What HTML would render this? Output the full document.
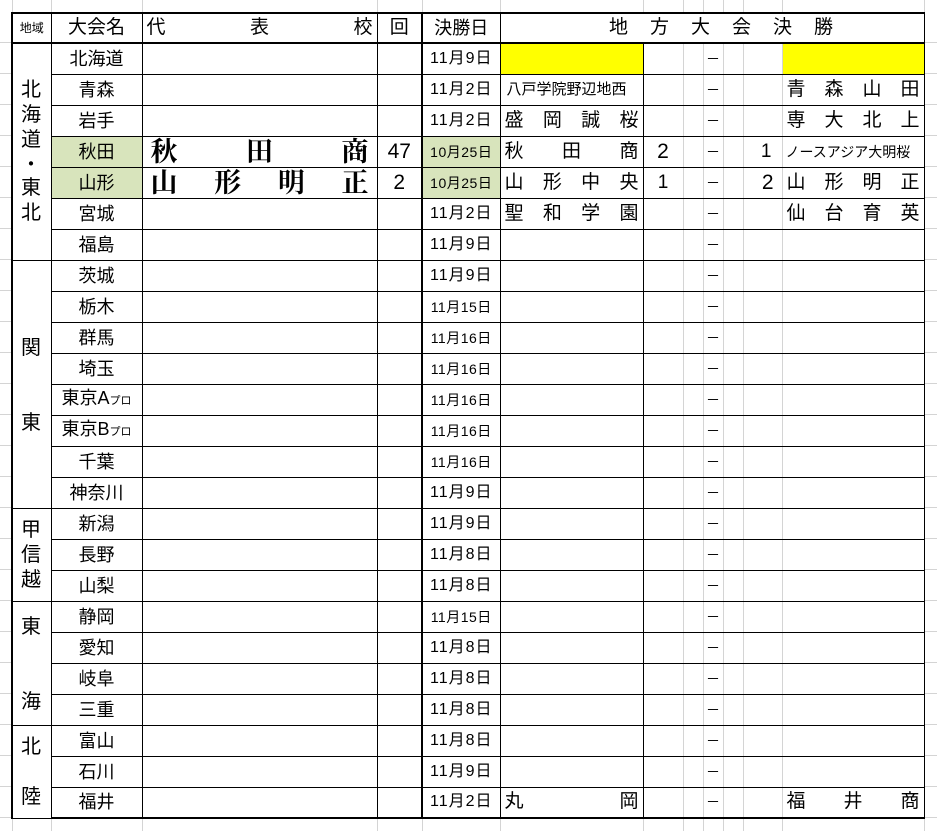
<!DOCTYPE html>
<html><head><meta charset="utf-8">
<style>
*{margin:0;padding:0;box-sizing:border-box}
body{width:937px;height:831px;background:#fff;position:relative;overflow:hidden;font-family:"Liberation Sans","Noto Sans CJK JP",sans-serif;color:#000}
.gv{position:absolute;width:1px;background:#d4d4d4}
table{position:absolute;left:11px;top:12px;border-collapse:collapse;table-layout:fixed;width:912px}
td{border:1px solid #000;padding:0;height:31px;line-height:20px;font-size:18px;text-align:center;vertical-align:middle;white-space:nowrap;overflow:hidden}
tr.h td{height:30px}
td.reg{border-left:2px solid #000}
td.d{border-left:2px solid #000;font-size:16px;letter-spacing:1px}
td.d.s{font-size:14px;letter-spacing:0.5px}
td.g{background:#d8e4bc}
td.r{border-left:1px solid #d4d4d4;border-right:1px solid #d4d4d4}
td.m{font-size:14px}
td.last{border-right:1px solid #000}
.sp{display:flex;justify-content:space-between;padding:0 4px;font-size:19px}
.big{display:flex;justify-content:space-between;padding:0 8px;font-family:"Liberation Serif","Noto Serif CJK JP",serif;font-weight:bold;font-size:27px;line-height:28px}
.y{background:#ff0}
small{font-size:11px}
tr.bot td{border-bottom:2px solid #000}
tr.top td{border-top:2px solid #000}
.lab{position:absolute;left:12px;width:38px;text-align:center;font-size:20px;line-height:20px}
</style></head><body>
<div class="gv" style="left:12px;top:0;height:12px"></div>
<div class="gv" style="left:51px;top:0;height:12px"></div>
<div class="gv" style="left:142px;top:0;height:12px"></div>
<div class="gv" style="left:377px;top:0;height:12px"></div>
<div class="gv" style="left:422px;top:0;height:12px"></div>
<div class="gv" style="left:500px;top:0;height:12px"></div>
<div class="gv" style="left:643px;top:0;height:12px"></div>
<div class="gv" style="left:683px;top:0;height:12px"></div>
<div class="gv" style="left:703px;top:0;height:12px"></div>
<div class="gv" style="left:723px;top:0;height:12px"></div>
<div class="gv" style="left:743px;top:0;height:12px"></div>
<div class="gv" style="left:782px;top:0;height:12px"></div>
<div class="gv" style="left:924px;top:0;height:831px"></div>
<div class="gv" style="left:12px;top:818px;height:13px"></div>
<div class="gv" style="left:51px;top:818px;height:13px"></div>
<div class="gv" style="left:142px;top:818px;height:13px"></div>
<div class="gv" style="left:377px;top:818px;height:13px"></div>
<div class="gv" style="left:422px;top:818px;height:13px"></div>
<div class="gv" style="left:500px;top:818px;height:13px"></div>
<div class="gv" style="left:643px;top:818px;height:13px"></div>
<div class="gv" style="left:683px;top:818px;height:13px"></div>
<div class="gv" style="left:703px;top:818px;height:13px"></div>
<div class="gv" style="left:723px;top:818px;height:13px"></div>
<div class="gv" style="left:743px;top:818px;height:13px"></div>
<div class="gv" style="left:782px;top:818px;height:13px"></div>
<div style="position:absolute;left:0;top:12px;width:12px;height:806px;background:repeating-linear-gradient(to bottom,transparent 0,transparent 30px,#d4d4d4 30px,#d4d4d4 31px)"></div>
<div style="position:absolute;left:925px;top:12px;width:12px;height:806px;background:repeating-linear-gradient(to bottom,transparent 0,transparent 30px,#d4d4d4 30px,#d4d4d4 31px)"></div>

<table>
<colgroup><col style="width:39px"><col style="width:91px"><col style="width:235px"><col style="width:45px"><col style="width:78px"><col style="width:143px"><col style="width:40px"><col style="width:20px"><col style="width:20px"><col style="width:20px"><col style="width:39px"><col style="width:142px"></colgroup>
<tr class="h top">
<td style="font-size:12px;border-left:2px solid #000">地域</td><td style="font-size:19px">大会名</td>
<td><div class="sp" style="font-size:19px"><span>代</span><span>表</span><span>校</span></div></td>
<td style="font-size:19px">回</td><td class="d" style="font-size:18px;letter-spacing:0">決勝日</td>
<td colspan="7" class="last" style="font-size:19px;letter-spacing:22px;padding-left:40px">地方大会決勝</td></tr>

<tr class="top"><td class="reg" rowspan="7"></td><td>北海道</td><td></td><td></td><td class="d">11月9日</td><td class="y"></td><td class="r"></td><td class="r"></td><td class="r m">－</td><td class="r"></td><td class="r"></td><td class="y last"></td></tr>
<tr><td>青森</td><td></td><td></td><td class="d">11月2日</td><td style="font-size:15px;text-align:left;padding-left:6px">八戸学院野辺地西</td><td class="r"></td><td class="r"></td><td class="r m">－</td><td class="r"></td><td class="r"></td><td class="last"><div class="sp"><span>青</span><span>森</span><span>山</span><span>田</span></div></td></tr>
<tr><td>岩手</td><td></td><td></td><td class="d">11月2日</td><td><div class="sp"><span>盛</span><span>岡</span><span>誠</span><span>桜</span></div></td><td class="r"></td><td class="r"></td><td class="r m">－</td><td class="r"></td><td class="r"></td><td class="last"><div class="sp"><span>専</span><span>大</span><span>北</span><span>上</span></div></td></tr>
<tr><td class="g">秋田</td><td><div class="big"><span>秋</span><span>田</span><span>商</span></div></td><td style="font-size:21px">47</td><td class="d s g">10月25日</td><td><div class="sp"><span>秋</span><span>田</span><span>商</span></div></td><td class="r" style="font-size:21px">2</td><td class="r"></td><td class="r m">－</td><td class="r"></td><td class="r" style="font-size:19px;text-align:right;padding-right:10px">1</td><td class="last" style="font-size:14px;text-align:left;padding-left:3px">ノースアジア大明桜</td></tr>
<tr><td class="g">山形</td><td><div class="big"><span>山</span><span>形</span><span>明</span><span>正</span></div></td><td style="font-size:21px">2</td><td class="d s g">10月25日</td><td><div class="sp"><span>山</span><span>形</span><span>中</span><span>央</span></div></td><td class="r" style="font-size:19px">1</td><td class="r"></td><td class="r m">－</td><td class="r"></td><td class="r" style="font-size:21px;text-align:right;padding-right:8px">2</td><td class="last"><div class="sp"><span>山</span><span>形</span><span>明</span><span>正</span></div></td></tr>
<tr><td>宮城</td><td></td><td></td><td class="d">11月2日</td><td><div class="sp"><span>聖</span><span>和</span><span>学</span><span>園</span></div></td><td class="r"></td><td class="r"></td><td class="r m">－</td><td class="r"></td><td class="r"></td><td class="last"><div class="sp"><span>仙</span><span>台</span><span>育</span><span>英</span></div></td></tr>
<tr><td>福島</td><td></td><td></td><td class="d">11月9日</td><td></td><td class="r"></td><td class="r"></td><td class="r m">－</td><td class="r"></td><td class="r"></td><td class="last"></td></tr>

<tr><td class="reg" rowspan="8"></td><td>茨城</td><td></td><td></td><td class="d">11月9日</td><td></td><td class="r"></td><td class="r"></td><td class="r m">－</td><td class="r"></td><td class="r"></td><td class="last"></td></tr>
<tr><td>栃木</td><td></td><td></td><td class="d s">11月15日</td><td></td><td class="r"></td><td class="r"></td><td class="r m">－</td><td class="r"></td><td class="r"></td><td class="last"></td></tr>
<tr><td>群馬</td><td></td><td></td><td class="d s">11月16日</td><td></td><td class="r"></td><td class="r"></td><td class="r m">－</td><td class="r"></td><td class="r"></td><td class="last"></td></tr>
<tr><td>埼玉</td><td></td><td></td><td class="d s">11月16日</td><td></td><td class="r"></td><td class="r"></td><td class="r m">－</td><td class="r"></td><td class="r"></td><td class="last"></td></tr>
<tr><td>東京A<small>プロ</small></td><td></td><td></td><td class="d s">11月16日</td><td></td><td class="r"></td><td class="r"></td><td class="r m">－</td><td class="r"></td><td class="r"></td><td class="last"></td></tr>
<tr><td>東京B<small>プロ</small></td><td></td><td></td><td class="d s">11月16日</td><td></td><td class="r"></td><td class="r"></td><td class="r m">－</td><td class="r"></td><td class="r"></td><td class="last"></td></tr>
<tr><td>千葉</td><td></td><td></td><td class="d s">11月16日</td><td></td><td class="r"></td><td class="r"></td><td class="r m">－</td><td class="r"></td><td class="r"></td><td class="last"></td></tr>
<tr><td>神奈川</td><td></td><td></td><td class="d">11月9日</td><td></td><td class="r"></td><td class="r"></td><td class="r m">－</td><td class="r"></td><td class="r"></td><td class="last"></td></tr>

<tr><td class="reg" rowspan="3"></td><td>新潟</td><td></td><td></td><td class="d">11月9日</td><td></td><td class="r"></td><td class="r"></td><td class="r m">－</td><td class="r"></td><td class="r"></td><td class="last"></td></tr>
<tr><td>長野</td><td></td><td></td><td class="d">11月8日</td><td></td><td class="r"></td><td class="r"></td><td class="r m">－</td><td class="r"></td><td class="r"></td><td class="last"></td></tr>
<tr><td>山梨</td><td></td><td></td><td class="d">11月8日</td><td></td><td class="r"></td><td class="r"></td><td class="r m">－</td><td class="r"></td><td class="r"></td><td class="last"></td></tr>

<tr><td class="reg" rowspan="4"></td><td>静岡</td><td></td><td></td><td class="d s">11月15日</td><td></td><td class="r"></td><td class="r"></td><td class="r m">－</td><td class="r"></td><td class="r"></td><td class="last"></td></tr>
<tr><td>愛知</td><td></td><td></td><td class="d">11月8日</td><td></td><td class="r"></td><td class="r"></td><td class="r m">－</td><td class="r"></td><td class="r"></td><td class="last"></td></tr>
<tr><td>岐阜</td><td></td><td></td><td class="d">11月8日</td><td></td><td class="r"></td><td class="r"></td><td class="r m">－</td><td class="r"></td><td class="r"></td><td class="last"></td></tr>
<tr><td>三重</td><td></td><td></td><td class="d">11月8日</td><td></td><td class="r"></td><td class="r"></td><td class="r m">－</td><td class="r"></td><td class="r"></td><td class="last"></td></tr>

<tr><td class="reg" rowspan="3"></td><td>富山</td><td></td><td></td><td class="d">11月8日</td><td></td><td class="r"></td><td class="r"></td><td class="r m">－</td><td class="r"></td><td class="r"></td><td class="last"></td></tr>
<tr><td>石川</td><td></td><td></td><td class="d">11月9日</td><td></td><td class="r"></td><td class="r"></td><td class="r m">－</td><td class="r"></td><td class="r"></td><td class="last"></td></tr>
<tr class="bot"><td>福井</td><td></td><td></td><td class="d">11月2日</td><td><div class="sp"><span>丸</span><span>岡</span></div></td><td class="r"></td><td class="r"></td><td class="r m">－</td><td class="r"></td><td class="r"></td><td class="last"><div class="sp"><span>福</span><span>井</span><span>商</span></div></td></tr>
</table>

<div class="lab" style="top:80px">北</div>
<div class="lab" style="top:105px">海</div>
<div class="lab" style="top:130px">道</div>
<div class="lab" style="top:155px">・</div>
<div class="lab" style="top:178px">東</div>
<div class="lab" style="top:203px">北</div>
<div class="lab" style="top:338px">関</div>
<div class="lab" style="top:413px">東</div>
<div class="lab" style="top:520px">甲</div>
<div class="lab" style="top:545px">信</div>
<div class="lab" style="top:570px">越</div>
<div class="lab" style="top:617px">東</div>
<div class="lab" style="top:692px">海</div>
<div class="lab" style="top:737px">北</div>
<div class="lab" style="top:787px">陸</div>
</body></html>
